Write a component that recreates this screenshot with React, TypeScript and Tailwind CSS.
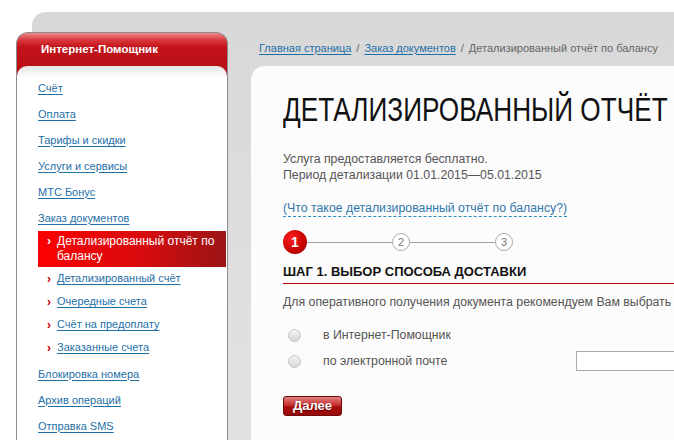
import React from "react";

const menuTop = ["Счёт", "Оплата", "Тарифы и скидки", "Услуги и сервисы", "МТС Бонус", "Заказ документов"];
const subItems = ["Детализированный счёт", "Очередные счета", "Счёт на предоплату", "Заказанные счета"];
const menuBottom = ["Блокировка номера", "Архив операций", "Отправка SMS"];

const linkCls = "text-[#1f70a8] underline underline-offset-2 decoration-[#1f70a8]";

function Sidebar() {
  return (
    <aside className="-ml-4 flex w-[212px] shrink-0 flex-col rounded-t-[12px] border-x border-t border-[#8c8c8c] bg-[linear-gradient(to_bottom,#ec8a8a_0px,#d9383c_7px,#c4141b_14px,#b80f15_34px)] text-[11px]">
      <div className="flex h-[33px] items-center pl-6 text-[11.5px] font-bold text-white">Интернет-Помощник</div>
      <div className="flex-1 rounded-t-[10px] bg-[linear-gradient(to_bottom,#e6e6e6_0px,#ffffff_12px)] pl-[21px] pr-[1px] pt-[9px]">
        {menuTop.map((t) => (
          <div key={t} className="flex h-[26px] items-center">
            <a className={linkCls}>{t}</a>
          </div>
        ))}
        <div className="flex bg-[linear-gradient(to_right,#fb0000_0%,#d90b0e_55%,#9a1515_100%)] py-[3px] pl-[9px] text-[12px] leading-[15px] text-white">
          <span className="w-[10px] shrink-0 font-bold">›</span>
          <span>Детализированный отчёт по балансу</span>
        </div>
        {subItems.map((t) => (
          <div key={t} className="flex h-[23px] items-center pl-[9px]">
            <span className="w-[10px] shrink-0 text-[12px] font-bold text-[#d40000]">›</span>
            <a className={linkCls}>{t}</a>
          </div>
        ))}
        <div className="mt-[2px]">
          {menuBottom.map((t) => (
            <div key={t} className="flex h-[26px] items-center">
              <a className={linkCls}>{t}</a>
            </div>
          ))}
        </div>
      </div>
    </aside>
  );
}

function Steps() {
  return (
    <div className="mt-[13px] flex h-[24px] items-center">
      <div className="flex h-[24px] w-[24px] items-center justify-center rounded-full bg-[radial-gradient(circle_at_35%_35%,#ff2020,#c50000_60%,#8e0000)] text-[14px] font-bold text-white">1</div>
      <div className="h-px w-[85px] bg-[#a0a0a0]" />
      <div className="flex h-[18px] w-[18px] items-center justify-center rounded-full border border-[#aaaaaa] bg-white text-[11px] text-[#777]">2</div>
      <div className="h-px w-[85px] bg-[#a0a0a0]" />
      <div className="flex h-[18px] w-[18px] items-center justify-center rounded-full border border-[#aaaaaa] bg-white text-[11px] text-[#777]">3</div>
    </div>
  );
}

function Radio() {
  return <span className="ml-[5px] h-[13px] w-[13px] shrink-0 rounded-full border border-[#c4c4c4] bg-[linear-gradient(to_bottom,#f4f4f4,#d6d6d6)]" />;
}

export default function App() {
  return (
    <div className="h-[440px] w-[674px] overflow-hidden bg-white pl-8 pt-3 font-['Liberation_Sans',Arial,sans-serif]">
      <div className="flex h-[460px] rounded-tl-[14px] bg-[linear-gradient(to_bottom,#d8d8d8,#e3e3e3)] pt-5">
        <Sidebar />
        <main className="ml-[23px] flex min-w-0 flex-1 flex-col pt-2">
          <div className="flex h-4 items-center pl-2 text-[11px] text-[#666]">
            <a className={linkCls}>Главная страница</a>
            <span className="px-[5px]">/</span>
            <a className={linkCls}>Заказ документов</a>
            <span className="px-[5px]">/</span>
            <span className="whitespace-nowrap">Детализированный отчёт по балансу</span>
          </div>
          <div className="mt-[10px] flex-1 overflow-hidden rounded-tl-[14px] bg-[#fcfcfc] pl-8 pt-[25px]">
            <h1 className="origin-left scale-x-[0.77] whitespace-nowrap text-[34px] leading-[36px] text-[#111]">ДЕТАЛИЗИРОВАННЫЙ ОТЧЁТ</h1>
            <div className="mt-[24px] text-[12.3px] leading-4 text-[#555]">
              <p>Услуга предоставляется бесплатно.</p>
              <p>Период детализации 01.01.2015—05.01.2015</p>
            </div>
            <div className="mt-[17px] flex text-[12.3px] leading-4">
              <a className="border-b border-dashed border-[#2a8dc4] text-[#2f78ad]">(Что такое детализированный отчёт по балансу?)</a>
            </div>
            <Steps />
            <div className="mt-[10px] border-b border-[#b40000] pb-[3px]">
              <h2 className="whitespace-nowrap text-[13px] font-bold leading-4 text-[#111]">ШАГ 1. ВЫБОР СПОСОБА ДОСТАВКИ</h2>
            </div>
            <p className="mt-[10px] whitespace-nowrap text-[12.3px] leading-4 text-[#555]">Для оперативного получения документа рекомендуем Вам выбрать</p>
            <div className="mt-[12px] text-[12.3px] text-[#555]">
              <div className="flex h-[26px] items-center">
                <Radio />
                <span className="ml-[22px]">в Интернет-Помощник</span>
              </div>
              <div className="flex h-[26px] items-center">
                <Radio />
                <span className="ml-[22px] w-[253px] shrink-0">по электронной почте</span>
                <input className="h-[20px] w-[200px] shrink-0 border border-[#a8a8a8] bg-white" />
              </div>
            </div>
            <button className="mt-[22px] flex h-[20px] w-[59px] items-center justify-center rounded-[3px] border border-[#6e0a0a] bg-[linear-gradient(to_bottom,#e08080_0%,#c83030_45%,#a80d0d_55%,#9a0a0a_100%)] text-[13px] font-bold text-white [text-shadow:0_1px_1px_#500]">Далее</button>
          </div>
        </main>
      </div>
    </div>
  );
}
